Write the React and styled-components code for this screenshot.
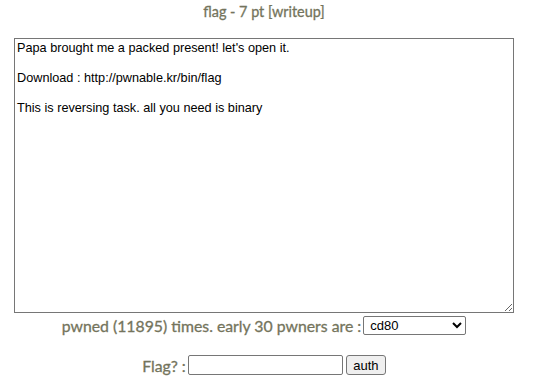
import React from 'react'
import styled, { createGlobalStyle } from 'styled-components'

const GlobalStyle = createGlobalStyle`
  html, body {
    margin: 0;
    padding: 0;
    background: #fff;
  }
`;

const Page = styled.div`
  width: 528px;
  height: 386px;
  display: flex;
  flex-direction: column;
  align-items: center;
  font-family: Lato, "Open Sans", sans-serif;
  color: #74745c;
  -webkit-text-stroke: 0.3px #74745c;
`;

const Title = styled.div`
  font-size: 14.4px;
  margin-top: 2px;
  height: 20px;
  line-height: 20px;
`;

const Description = styled.textarea`
  box-sizing: border-box;
  width: 500px;
  height: 275px;
  margin-top: 16px;
  padding: 2px 2px;
  border: 1px solid #767676;
  font-family: "Liberation Sans", Arial, sans-serif;
  font-size: 12.7px;
  line-height: 15px;
  color: #000;
  -webkit-text-stroke: 0;
  resize: both;
  outline: none;
`;

const Row = styled.div`
  display: flex;
  align-items: center;
  gap: 2px;
  font-size: 15.8px;
  margin-top: ${({ $top }) => $top}px;
`;

const Select = styled.select`
  width: 103px;
  height: 19px;
  font-family: "Liberation Sans", Arial, sans-serif;
  font-size: 13px;
  color: #000;
  -webkit-text-stroke: 0;
  border: 1px solid #767676;
  border-radius: 2px;
  background: #fff;
  padding: 0 0 0 2px;
`;

const FlagInput = styled.input`
  box-sizing: border-box;
  width: 155px;
  height: 20px;
  border: 1px solid #767676;
  border-radius: 2px;
  margin: 0;
`;

const AuthButton = styled.button`
  box-sizing: border-box;
  height: 20px;
  width: 40px;
  padding: 0;
  margin-left: 1px;
  font-family: "Liberation Sans", Arial, sans-serif;
  font-size: 13px;
  color: #000;
  -webkit-text-stroke: 0;
  background: #efefef;
  border: 1px solid #767676;
  border-radius: 3px;
`;

const App = () => {
  const text =
    "Papa brought me a packed present! let's open it.\n\nDownload : http://pwnable.kr/bin/flag\n\nThis is reversing task. all you need is binary";
  return (
    <>
      <GlobalStyle />
      <Page>
        <Title>flag - 7 pt [writeup]</Title>
        <Description defaultValue={text} />
        <Row $top={3}>
          pwned (11895) times. early 30 pwners are :
          <Select defaultValue="cd80">
            <option value="cd80">cd80</option>
          </Select>
        </Row>
        <Row $top={20}>
          Flag? :
          <FlagInput />
          <AuthButton>auth</AuthButton>
        </Row>
      </Page>
    </>
  )
}

export default App
